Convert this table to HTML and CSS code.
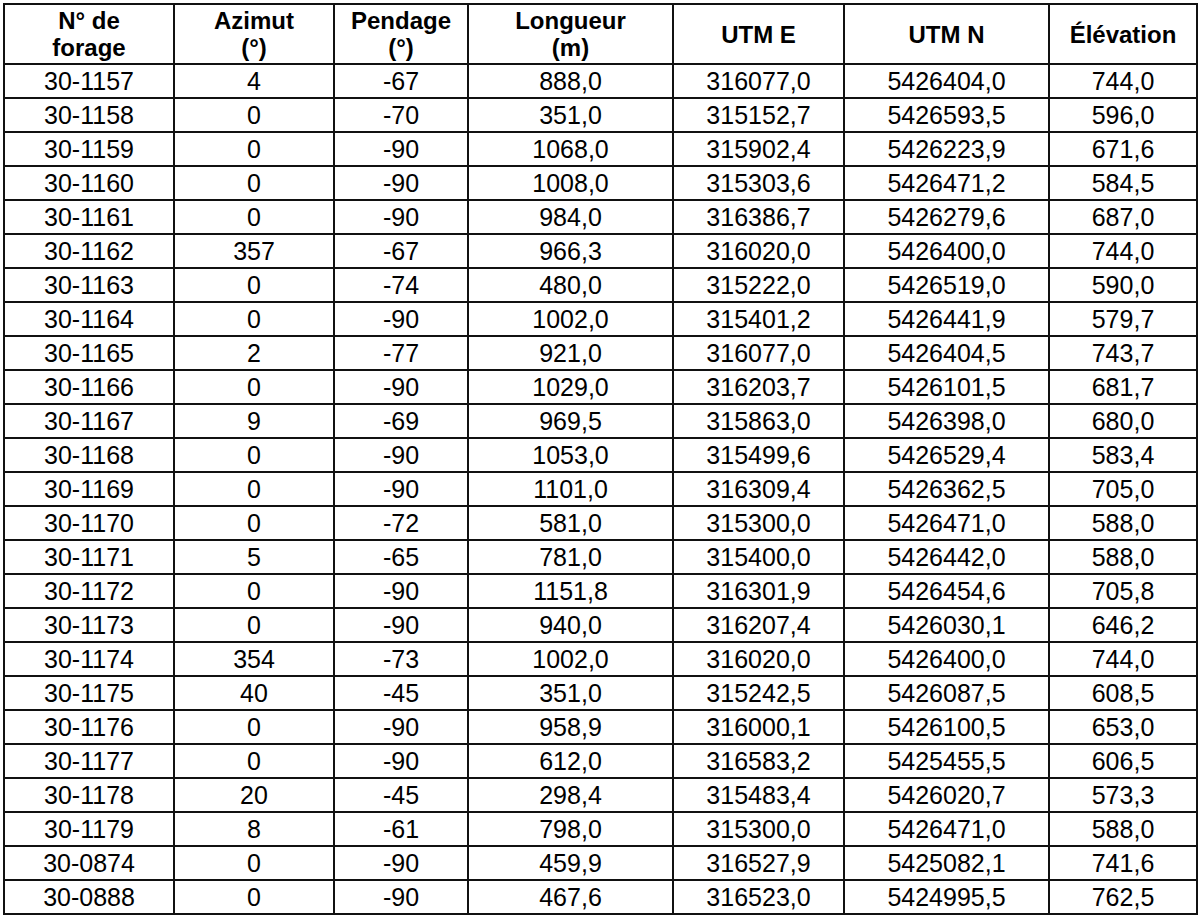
FILE: index.html
```html
<!DOCTYPE html>
<html lang="fr">
<head>
<meta charset="utf-8">
<link rel="stylesheet" href="styles.css">
</head>
<body>
<table class="data">
<colgroup>
<col class="c1"><col class="c2"><col class="c3"><col class="c4"><col class="c5"><col class="c6"><col class="c7">
</colgroup>
<thead>
<tr><th>N° de<br>forage</th><th>Azimut<br>(°)</th><th>Pendage<br>(°)</th><th>Longueur<br>(m)</th><th>UTM E</th><th>UTM N</th><th>Élévation</th></tr>
</thead>
<tbody>
<tr><td>30-1157</td><td>4</td><td>-67</td><td>888,0</td><td>316077,0</td><td>5426404,0</td><td>744,0</td></tr>
<tr><td>30-1158</td><td>0</td><td>-70</td><td>351,0</td><td>315152,7</td><td>5426593,5</td><td>596,0</td></tr>
<tr><td>30-1159</td><td>0</td><td>-90</td><td>1068,0</td><td>315902,4</td><td>5426223,9</td><td>671,6</td></tr>
<tr><td>30-1160</td><td>0</td><td>-90</td><td>1008,0</td><td>315303,6</td><td>5426471,2</td><td>584,5</td></tr>
<tr><td>30-1161</td><td>0</td><td>-90</td><td>984,0</td><td>316386,7</td><td>5426279,6</td><td>687,0</td></tr>
<tr><td>30-1162</td><td>357</td><td>-67</td><td>966,3</td><td>316020,0</td><td>5426400,0</td><td>744,0</td></tr>
<tr><td>30-1163</td><td>0</td><td>-74</td><td>480,0</td><td>315222,0</td><td>5426519,0</td><td>590,0</td></tr>
<tr><td>30-1164</td><td>0</td><td>-90</td><td>1002,0</td><td>315401,2</td><td>5426441,9</td><td>579,7</td></tr>
<tr><td>30-1165</td><td>2</td><td>-77</td><td>921,0</td><td>316077,0</td><td>5426404,5</td><td>743,7</td></tr>
<tr><td>30-1166</td><td>0</td><td>-90</td><td>1029,0</td><td>316203,7</td><td>5426101,5</td><td>681,7</td></tr>
<tr><td>30-1167</td><td>9</td><td>-69</td><td>969,5</td><td>315863,0</td><td>5426398,0</td><td>680,0</td></tr>
<tr><td>30-1168</td><td>0</td><td>-90</td><td>1053,0</td><td>315499,6</td><td>5426529,4</td><td>583,4</td></tr>
<tr><td>30-1169</td><td>0</td><td>-90</td><td>1101,0</td><td>316309,4</td><td>5426362,5</td><td>705,0</td></tr>
<tr><td>30-1170</td><td>0</td><td>-72</td><td>581,0</td><td>315300,0</td><td>5426471,0</td><td>588,0</td></tr>
<tr><td>30-1171</td><td>5</td><td>-65</td><td>781,0</td><td>315400,0</td><td>5426442,0</td><td>588,0</td></tr>
<tr><td>30-1172</td><td>0</td><td>-90</td><td>1151,8</td><td>316301,9</td><td>5426454,6</td><td>705,8</td></tr>
<tr><td>30-1173</td><td>0</td><td>-90</td><td>940,0</td><td>316207,4</td><td>5426030,1</td><td>646,2</td></tr>
<tr><td>30-1174</td><td>354</td><td>-73</td><td>1002,0</td><td>316020,0</td><td>5426400,0</td><td>744,0</td></tr>
<tr><td>30-1175</td><td>40</td><td>-45</td><td>351,0</td><td>315242,5</td><td>5426087,5</td><td>608,5</td></tr>
<tr><td>30-1176</td><td>0</td><td>-90</td><td>958,9</td><td>316000,1</td><td>5426100,5</td><td>653,0</td></tr>
<tr><td>30-1177</td><td>0</td><td>-90</td><td>612,0</td><td>316583,2</td><td>5425455,5</td><td>606,5</td></tr>
<tr><td>30-1178</td><td>20</td><td>-45</td><td>298,4</td><td>315483,4</td><td>5426020,7</td><td>573,3</td></tr>
<tr><td>30-1179</td><td>8</td><td>-61</td><td>798,0</td><td>315300,0</td><td>5426471,0</td><td>588,0</td></tr>
<tr><td>30-0874</td><td>0</td><td>-90</td><td>459,9</td><td>316527,9</td><td>5425082,1</td><td>741,6</td></tr>
<tr><td>30-0888</td><td>0</td><td>-90</td><td>467,6</td><td>316523,0</td><td>5424995,5</td><td>762,5</td></tr>
</tbody>
</table>
</body>
</html>
```
FILE: styles.css
```css
html, body {
  margin: 0;
  padding: 0;
  background: #fff;
}
body {
  padding: 3px 0 0 3px;
  font-family: "Liberation Sans", Arial, sans-serif;
  color: #000;
}
.data {
  border-collapse: collapse;
  table-layout: fixed;
  width: 1193px;
}
.c1 { width: 170px; }
.c2 { width: 160px; }
.c3 { width: 134px; }
.c4 { width: 205px; }
.c5 { width: 171px; }
.c6 { width: 205px; }
.c7 { width: 148px; }
.data th, .data td {
  border: 2px solid #111;
  padding: 0;
  text-align: center;
  vertical-align: middle;
  font-size: 25px;
}
.data th {
  font-weight: bold;
  font-size: 24px;
  line-height: 27px;
  height: 58px;
}
.data td {
  line-height: 26px;
  height: 32px;
}
```
